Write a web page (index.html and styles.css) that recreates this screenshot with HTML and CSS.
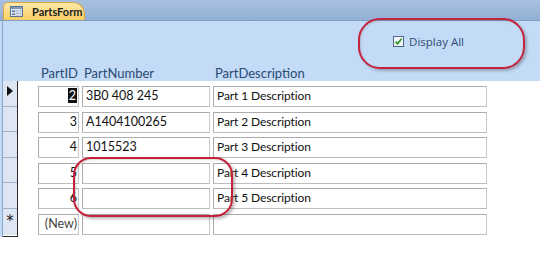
FILE: index.html
```html
<html lang="en">
<head>
    <link rel="stylesheet" href="styles.css">
</head>
<body>
<div class="tabbar">
    <div class="tab">
        <svg class="tab-icon" width="13" height="11" viewBox="0 0 13 11">
            <rect x="0.5" y="0.5" width="12" height="10" fill="#dfe7f2" stroke="#5d7494"/>
            <rect x="1" y="1" width="11" height="2" fill="#7f97b8"/>
            <rect x="2" y="4.5" width="3" height="1.5" fill="#5d7494"/>
            <rect x="6" y="4.5" width="5" height="1.5" fill="#ffffff" stroke="#7f97b8" stroke-width="0.5"/>
            <rect x="2" y="7.5" width="3" height="1.5" fill="#5d7494"/>
            <rect x="6" y="7.5" width="5" height="1.5" fill="#ffffff" stroke="#7f97b8" stroke-width="0.5"/>
        </svg>
        <span>PartsForm</span>
    </div>
</div>

<div class="form">
    <div class="form-header">
        <div class="toolbar">
            <label class="check">
                <span class="box">
                    <svg width="9" height="9" viewBox="0 0 9 9"><path d="M1.5 4.5 L3.5 6.8 L7.6 1.8" fill="none" stroke="#2f9a2f" stroke-width="1.8"/></svg>
                </span>
                Display All
            </label>
        </div>
        <div class="labels">
            <span class="lbl lbl-id">PartID</span>
            <span class="lbl lbl-num">PartNumber</span>
            <span class="lbl lbl-desc">PartDescription</span>
        </div>
    </div>

    <div class="detail">
        <div class="selectors">
            <div class="sel current"><span class="arrow"></span></div>
            <div class="sel"></div>
            <div class="sel"></div>
            <div class="sel"></div>
            <div class="sel"></div>
            <div class="sel newrec">*</div>
        </div>
        <div class="rows">
            <div class="row">
                <div class="field f-id"><span class="selected">2</span></div>
                <div class="field f-num">3B0 408 245</div>
                <div class="field f-desc">Part 1 Description</div>
            </div>
            <div class="row">
                <div class="field f-id">3</div>
                <div class="field f-num">A1404100265</div>
                <div class="field f-desc">Part 2 Description</div>
            </div>
            <div class="row">
                <div class="field f-id">4</div>
                <div class="field f-num">1015523</div>
                <div class="field f-desc">Part 3 Description</div>
            </div>
            <div class="row">
                <div class="field f-id">5</div>
                <div class="field f-num"></div>
                <div class="field f-desc">Part 4 Description</div>
            </div>
            <div class="row">
                <div class="field f-id">6</div>
                <div class="field f-num"></div>
                <div class="field f-desc">Part 5 Description</div>
            </div>
            <div class="row">
                <div class="field f-id new">(New)</div>
                <div class="field f-num"></div>
                <div class="field f-desc"></div>
            </div>
        </div>
    </div>
</div>

<!-- hand-drawn highlight marks over the screenshot -->
<div class="mark mark-check"></div>
<div class="mark mark-rows"></div>
</body>
</html>
```

FILE: styles.css
```css
body {
    margin: 0;
    width: 540px;
    height: 273px;
    overflow: hidden;
    position: relative;
    background: #ffffff;
    font-family: "Lato", "Open Sans", sans-serif;
}

.tabbar {
    height: 20px;
    background: linear-gradient(#a9c1e0, #93afd6);
    border-bottom: 1px solid #7f9cc6;
    padding-left: 3px;
    display: flex;
    align-items: flex-end;
}

.tab {
    width: 82px;
    height: 18px;
    padding-left: 6px;
    display: flex;
    align-items: center;
    gap: 9px;
    background: linear-gradient(#fde9a8, #f9cd62);
    border: 1px solid #d9a640;
    border-bottom: none;
    border-radius: 5px 12px 0 0;
    box-sizing: border-box;
    font-size: 11px;
    font-weight: bold;
    color: #1d1d1d;
}

.form {
    border-left: 2px solid #c3daf6;
    box-shadow: inset 1px 0 0 #8aa6cc;
    padding-left: 1px;
}

.form-header {
    height: 60px;
    background: #c4dbf7;
    margin-left: -1px;
    border-left: 1px solid #8aa6cc;
    display: flex;
    flex-direction: column;
}

.toolbar {
    height: 43px;
    display: flex;
    justify-content: flex-end;
    align-items: center;
    padding: 0 76px 2px 0;
}

.check {
    display: flex;
    align-items: center;
    gap: 5px;
    font-family: "Open Sans", sans-serif;
    font-size: 11.5px;
    color: #2d4c72;
}

.box {
    width: 9px;
    height: 9px;
    border: 1px solid #4b6484;
    background: #f4f8fc;
    display: flex;
}

.labels {
    height: 17px;
    display: flex;
    font-size: 13px;
    color: #2a4a72;
}

.lbl-id {
    width: 75px;
    text-align: right;
}

.lbl-num {
    width: 131px;
    padding-left: 6px;
}

.detail {
    display: flex;
}

.selectors {
    width: 14px;
    height: 155px;
    border-right: 1px solid #2b2b2b;
    border-bottom: 1px solid #2b2b2b;
    display: flex;
    flex-direction: column;
}

.sel {
    height: 25.6px;
    box-sizing: border-box;
    background: #dde6f2;
    border-bottom: 1px solid #9fb2cc;
    display: flex;
    align-items: center;
    justify-content: center;
}

.sel.current {
    align-items: flex-start;
    padding-top: 5px;
}

.arrow {
    width: 0;
    height: 0;
    border-left: 6px solid #111;
    border-top: 5px solid transparent;
    border-bottom: 5px solid transparent;
}

.newrec {
    font-family: "DejaVu Sans", sans-serif;
    font-size: 15px;
    color: #222;
    align-items: flex-start;
    padding-top: 3px;
    border-bottom: none;
}

.rows {
    display: flex;
    flex-direction: column;
    padding-left: 20px;
}

.row {
    height: 25.6px;
    display: flex;
    gap: 3px;
    padding-top: 5px;
    box-sizing: border-box;
}

.field {
    height: 21px;
    box-sizing: border-box;
    border: 1px solid #acacac;
    border-right-color: #c8c8c8;
    border-bottom-color: #bdbdbd;
    background: #ffffff;
    font-size: 12.5px;
    color: #111;
    line-height: 18px;
    padding: 0 3px;
    white-space: nowrap;
    overflow: hidden;
}

.f-id {
    width: 41px;
    text-align: right;
    padding-right: 1px;
}

.f-num {
    width: 128px;
}

.f-desc {
    width: 274px;
    font-size: 12px;
    letter-spacing: -0.1px;
}

.new {
    color: #444;
}

.selected {
    background: #111;
    color: #fff;
    padding: 0 1px;
}

.mark {
    position: absolute;
    border: 2px solid #c4223c;
    box-shadow: 2px 2px 3px rgba(60, 60, 60, 0.35), inset 1px 1px 2px rgba(60, 60, 60, 0.2);
    box-sizing: border-box;
}

.mark-check {
    left: 358px;
    top: 18px;
    width: 167px;
    height: 51px;
    border-radius: 22px;
}

.mark-rows {
    left: 73px;
    top: 157px;
    width: 160px;
    height: 60px;
    border-radius: 18px;
}
```
